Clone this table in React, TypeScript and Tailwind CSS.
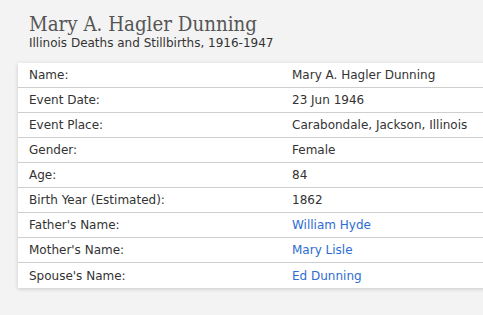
import React from 'react';

const rows: { label: string; value: string; link?: boolean }[] = [
  { label: 'Name:', value: 'Mary A. Hagler Dunning' },
  { label: 'Event Date:', value: '23 Jun 1946' },
  { label: 'Event Place:', value: 'Carabondale, Jackson, Illinois' },
  { label: 'Gender:', value: 'Female' },
  { label: 'Age:', value: '84' },
  { label: 'Birth Year (Estimated):', value: '1862' },
  { label: "Father's Name:", value: 'William Hyde', link: true },
  { label: "Mother's Name:", value: 'Mary Lisle', link: true },
  { label: "Spouse's Name:", value: 'Ed Dunning', link: true },
];

export default function App() {
  return (
    <div className="h-[315px] w-[483px] overflow-hidden bg-[#f3f3f3] pt-[12px] font-['DejaVu_Sans',sans-serif]">
      <div className="pl-[29px]">
        <h1 className="font-['DejaVu_Serif_Condensed','DejaVu_Serif',serif] font-stretch-condensed text-[20.3px] leading-[24px] text-[#555]">
          Mary A. Hagler Dunning
        </h1>
        <p className="text-[12px] leading-[14px] text-[#333]">
          Illinois Deaths and Stillbirths, 1916-1947
        </p>
      </div>
      <div className="ml-[18px] mt-[13px] w-[500px] bg-white shadow-[0_1px_4px_rgba(0,0,0,0.18)]">
        {rows.map((r, i) => (
          <div
            key={r.label}
            className={`flex h-[25px] items-center text-[12px] ${i < rows.length - 1 ? 'border-b border-[#cfcfcf]' : ''}`}
          >
            <div className="w-[274px] pl-[11px] text-[#333]">{r.label}</div>
            <div className={r.link ? 'text-[#2d6dd2]' : 'text-[#333]'}>{r.value}</div>
          </div>
        ))}
      </div>
    </div>
  );
}
